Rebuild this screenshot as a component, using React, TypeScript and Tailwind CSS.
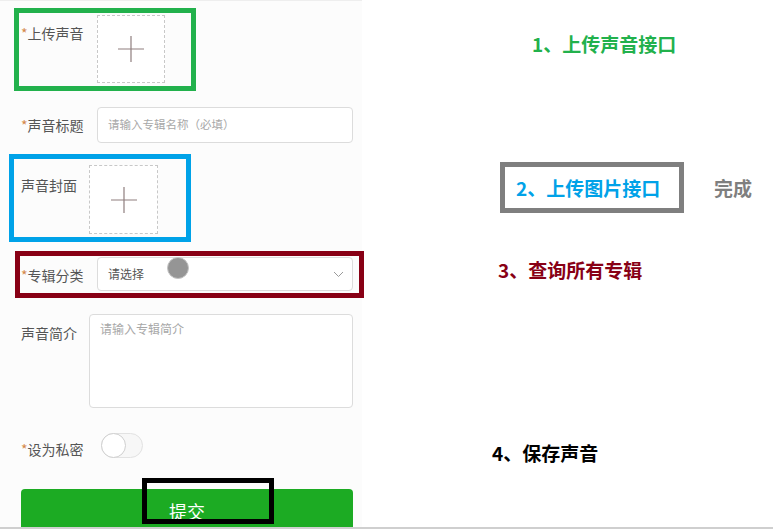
import React from "react";

const font = { fontFamily: '"Noto Sans CJK SC", "Noto Sans", sans-serif' };

// Dashed upload square with a thin plus
const UploadBox = ({ className }: { className: string }) => (
  <div className={`flex shrink-0 items-center justify-center border border-dashed border-[#c8c8c8] bg-white ${className}`}>
    <svg width="26" height="26" viewBox="0 0 26 26">
      <path d="M13 0V26M0 13H26" stroke="#8f7f7f" strokeWidth="1.2" />
    </svg>
  </div>
);

const Label = ({ text, required, className }: { text: string; required?: boolean; className: string }) => (
  <div className={`shrink-0 text-[14px] leading-5 text-[#555] ${className}`}>
    {required && <span className="text-[#d4884a]">*</span>}
    {text}
  </div>
);

const App = () => {
  return (
    <div className="flex h-[529px] w-[773px] flex-col overflow-hidden bg-white" style={font}>
      <div className="flex h-[527px] shrink-0 overflow-hidden">
        {/* form column */}
        <div className="flex w-[362px] shrink-0 flex-col border-t border-[#eee] bg-[#fcfcfc]">
          <div className="ml-[14px] mt-[7px] flex h-[83px] w-[182px] shrink-0 border-[5px] border-[#22b14c]">
            <Label text="上传声音" required className="ml-[2px] mt-[10px] w-[76px]" />
            <UploadBox className="mt-[2px] h-[68px] w-[68px]" />
          </div>

          <div className="mt-[16px] flex shrink-0 items-center pl-[21px]">
            <Label text="声音标题" required className="w-[76px]" />
            <div className="flex h-[36px] w-[256px] items-center rounded-[4px] border border-[#dcdcdc] bg-white pl-[10px] text-[11.5px] text-[#a8a8a8]">
              请输入专辑名称（必填）
            </div>
          </div>

          <div className="ml-[9px] mt-[11px] flex h-[88px] w-[182px] shrink-0 border-[5px] border-[#00a2e8]">
            <Label text="声音封面" className="ml-[7px] mt-[16px] w-[68px]" />
            <UploadBox className="mt-[6px] h-[69px] w-[69px]" />
          </div>

          <div className="ml-[15px] mt-[9px] flex h-[47px] w-[349px] shrink-0 border-[5px] border-[#880015]">
            <Label text="专辑分类" required className="ml-[1px] mt-[9px] w-[76px]" />
            <div className="relative mt-[1px] flex h-[34px] w-[256px] items-center justify-between rounded-[4px] border border-[#dcdcdc] bg-white pl-[10px] pr-[8px] text-[12px] text-[#555]">
              <span>请选择</span>
              <svg width="11" height="7" viewBox="0 0 11 7">
                <path d="M1 1L5.5 5.5L10 1" fill="none" stroke="#9a9a9a" strokeWidth="1" />
              </svg>
              <div className="absolute left-[69px] top-[-1px] h-[22px] w-[22px] rounded-full border border-[#c4c4c4] bg-[#959595]" />
            </div>
          </div>

          <div className="mt-[16px] flex shrink-0 items-start pl-[21px]">
            <Label text="声音简介" className="mt-[9px] w-[68px]" />
            <div className="h-[94px] w-[264px] rounded-[4px] border border-[#dcdcdc] bg-white pl-[10px] pt-[6px] text-[12px] leading-4 text-[#a8a8a8]">
              请输入专辑简介
            </div>
          </div>

          <div className="mt-[25px] flex shrink-0 items-start pl-[21px]">
            <Label text="设为私密" required className="mt-[6px] w-[80px]" />
            <div className="relative h-[25px] w-[42px] rounded-full border border-[#e2e2e2] bg-[#f7f7f7]">
              <div className="absolute left-[-1px] top-[-1px] h-[25px] w-[25px] rounded-full border border-[#cfcfcf] bg-white" />
            </div>
          </div>

          <div className="relative ml-[21px] mt-[30px] flex h-[48px] w-[332px] shrink-0 items-start justify-center rounded-[4px] bg-[#1cab23] pt-[12px] text-[18px] leading-[20px] text-white">
            提交
            <div className="absolute left-[121px] top-[-11px] h-[46px] w-[132px] border-[5px] border-black" />
          </div>
        </div>

        {/* annotation column */}
        <div className="flex flex-col text-[19px] font-bold leading-6">
          <div className="ml-[170px] mt-[32px] shrink-0 text-[#22b14c]">1、上传声音接口</div>
          <div className="mt-[106px] flex shrink-0 items-center">
            <div className="ml-[138px] flex h-[51px] w-[184px] items-center border-[5px] border-[#7f7f7f] pl-[11px] text-[#00a2e8]">
              2、上传图片接口
            </div>
            <div className="ml-[30px] text-[#7f7f7f]">完成</div>
          </div>
          <div className="ml-[136px] mt-[45px] shrink-0 text-[#880015]">3、查询所有专辑</div>
          <div className="ml-[130px] mt-[159px] shrink-0 text-black">4、保存声音</div>
        </div>
      </div>
      <div className="h-[2px] w-full shrink-0 bg-[#cfcfcf]" />
    </div>
  );
};

export default App;
